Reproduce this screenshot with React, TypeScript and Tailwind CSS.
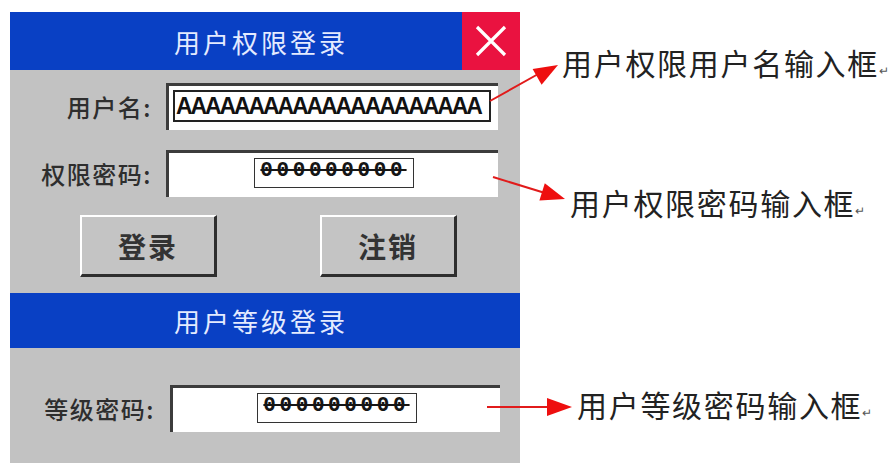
const cjk = { fontFamily: '"Noto Sans CJK SC", "Noto Sans", sans-serif' };

function Field({ label, labelW, inputW, gap, children }: { label: string; labelW: string; inputW: string; gap: string; children: React.ReactNode }) {
    return (
        <div className={`flex items-center h-[47px] ${gap}`}>
            <div className={`${labelW} text-right text-[24px] leading-none font-medium text-[#2e2e2e] tracking-[1.5px]`}>{label}</div>
            <div className={`${inputW} h-full bg-white border-t-[3px] border-l-[3px] border-[#3c3c3c] flex items-center`}>
                {children}
            </div>
        </div>
    );
}

function Mask() {
    return (
        <div className="mx-auto mt-[-4px] w-[160px] h-[30px] border border-[#333] flex items-start justify-center pt-[1px] overflow-hidden">
            <span className="text-[20px] leading-[18px] font-bold text-[#151515] tracking-[4.2px] line-through decoration-2" style={{ fontFamily: '"DejaVu Sans Mono", monospace' }}>
                ΘΘΘΘΘΘΘΘΘ
            </span>
        </div>
    );
}

function RaisedButton({ text }: { text: string }) {
    return (
        <button className="w-[137px] h-[62px] bg-[#c4c4c4] border-t-2 border-l-2 border-b-[3px] border-r-[3px] border-t-white border-l-white border-b-[#2e2e2e] border-r-[#2e2e2e] text-[28px] font-bold text-[#333] tracking-[2px]">
            {text}
        </button>
    );
}

function Note({ text, className }: { text: string; className: string }) {
    return (
        <div className={`h-[36px] flex items-center text-[30px] leading-[36px] text-[#222] tracking-[1.7px] whitespace-nowrap ${className}`}>
            {text}
            <span className="text-[12px] leading-none text-[#555] self-end mb-[4px]">↵</span>
        </div>
    );
}

export default function App() {
    return (
        <div className="relative w-[893px] h-[463px] bg-white overflow-hidden flex" style={cjk}>
            {/* login panel */}
            <div className="ml-[10px] mt-[12px] w-[510px] bg-[#c2c2c2] flex flex-col">
                <div className="relative h-[58px] bg-[#0940c4] flex items-center justify-center">
                    <span className="text-[26px] text-[#e4ebff] tracking-[3px] pr-[8px]">用户权限登录</span>
                    <div className="absolute right-0 top-0 w-[58px] h-[58px] bg-[#ea1240] flex items-center justify-center">
                        <svg width="32" height="32" viewBox="0 0 32 32">
                            <path d="M2 2 L30 30 M30 2 L2 30" stroke="white" strokeWidth="3.2" />
                        </svg>
                    </div>
                </div>

                <div className="mt-[13px]">
                    <Field label="用户名:" labelW="w-[142px]" inputW="w-[332px]" gap="gap-[14px]">
                        <div className="ml-[4px] mt-[-4px] w-[318px] h-[32px] border-2 border-[#222] overflow-hidden flex items-center">
                            <span className="text-[23px] leading-none font-bold text-[#111] tracking-[-2.1px] pl-[1px]" style={{ fontFamily: '"Liberation Sans", Arial, sans-serif' }}>
                                AAAAAAAAAAAAAAAAAAAAA
                            </span>
                        </div>
                    </Field>
                </div>

                <div className="mt-[20px]">
                    <Field label="权限密码:" labelW="w-[142px]" inputW="w-[332px]" gap="gap-[14px]">
                        <Mask />
                    </Field>
                </div>

                <div className="mt-[18px] flex pl-[70px] gap-[103px]">
                    <RaisedButton text="登录" />
                    <RaisedButton text="注销" />
                </div>

                <div className="mt-[16px] h-[55px] bg-[#0940c4] flex items-center justify-center">
                    <span className="text-[26px] text-[#e4ebff] tracking-[3px] pr-[8px]">用户等级登录</span>
                </div>

                <div className="mt-[37px]">
                    <Field label="等级密码:" labelW="w-[145px]" inputW="w-[330px]" gap="gap-[15px]">
                        <Mask />
                    </Field>
                </div>
            </div>

            {/* annotations */}
            <div className="flex flex-col">
                <Note text="用户权限用户名输入框" className="mt-[44px] pl-[42px]" />
                <Note text="用户权限密码输入框" className="mt-[104px] pl-[50px]" />
                <Note text="用户等级密码输入框" className="mt-[166px] pl-[57px]" />
            </div>

            {/* arrows */}
            <svg className="absolute inset-0 pointer-events-none" width="893" height="463" viewBox="0 0 893 463">
                <g stroke="#e11b1b" strokeWidth="2" fill="none">
                    <line x1="490" y1="101" x2="540" y2="73" />
                    <line x1="493" y1="177" x2="545" y2="193" />
                    <line x1="487" y1="407" x2="550" y2="407" />
                </g>
                <g fill="#ee0f0f">
                    <polygon points="558,65 541.6,84.7 532.6,69.1" />
                    <polygon points="565,199 539.4,200.4 544.8,183.2" />
                    <polygon points="572,407 547,398 547,416" />
                </g>
            </svg>
        </div>
    );
}
